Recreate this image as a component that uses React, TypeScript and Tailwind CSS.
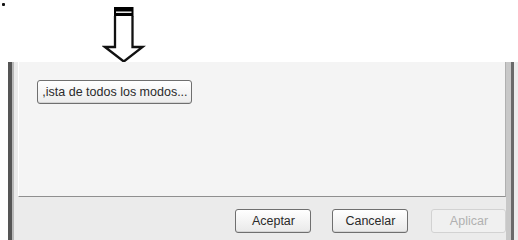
import React from "react";

const btn =
  "h-[24px] w-[76px] rounded-[3px] border border-[#6f6f6f] bg-gradient-to-b from-white to-[#e9e9e9] text-[12.5px] leading-none text-[#2a2a2a] flex items-center justify-center shadow-[inset_0_-1px_0_#d4d4d4]";

export default function App() {
  return (
    <div className="relative w-[518px] h-[240px] bg-white overflow-hidden font-['Liberation_Sans',Arial,sans-serif]">
      <div className="absolute left-[2px] top-[3px] w-[3px] h-[3px] rounded-[1px] bg-[#111]" />
      <div className="h-[62px] pl-[102px] pt-[5px]">
        <svg width="44" height="60" viewBox="0 0 44 60">
          <rect x="12" y="2" width="19.5" height="9.5" fill="#000" />
          <rect x="14" y="6.5" width="15.5" height="1.4" fill="#fff" />
          <path
            d="M13 11 V42 H3 L21.8 56.5 L40.6 42 H30.5 V11"
            fill="#fff"
            stroke="#111"
            strokeWidth="2.3"
            strokeLinejoin="miter"
          />
        </svg>
      </div>
      <div className="flex h-[178px]">
        <div className="w-[8px] bg-white" />
        <div className="w-[4px] bg-[#555555]" />
        <div className="w-[3px] bg-[#b8b8b8]" />
        <div className="flex-1 flex flex-col bg-[#ebebeb]">
          <div className="h-[135px] ml-[4px] bg-[#f4f4f4] border-l border-l-white border-r border-r-[#b0b0b0] border-b border-b-[#8f8f8f] pl-[18px] pt-[18px]">
            <div className="h-[24px] w-[155px] rounded-[3px] border border-[#6f6f6f] bg-gradient-to-b from-white to-[#ececec] text-[12.5px] leading-none text-[#2a2a2a] flex items-center justify-center shadow-[inset_0_-1px_0_#d4d4d4]">
              ,ista de todos los modos...
            </div>
          </div>
          <div className="flex pl-[221px] pt-[12px]">
            <div className={btn}>Aceptar</div>
            <div className={btn + " ml-[21px]"}>Cancelar</div>
            <div className="ml-[23px] h-[24px] w-[75px] rounded-[3px] border border-[#d2d2d2] bg-[#f0f0f0] text-[12.5px] leading-none text-[#b0b0b0] flex items-center justify-center">
              Aplicar
            </div>
          </div>
        </div>
        <div className="w-[5px] bg-[#c8c8c8]" />
        <div className="w-[3px] bg-[#6a6a6a]" />
        <div className="w-[4px] bg-[#ececec]" />
      </div>
    </div>
  );
}
